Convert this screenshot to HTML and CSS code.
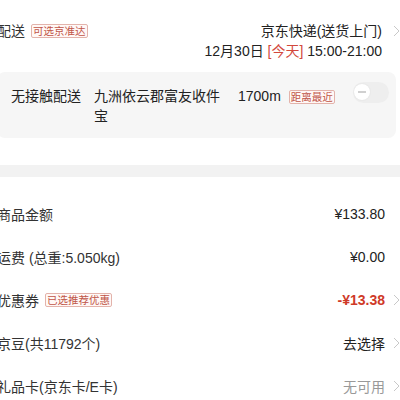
FILE: index.html
```html
<!DOCTYPE html>
<html lang="zh-CN">
<head>
  <meta charset="UTF-8">
  <meta name="viewport" content="width=device-width, initial-scale=1.0">
  <title>确认订单</title>
  <link rel="stylesheet" href="styles.css">
</head>
<body>
  <div class="page">
    <!-- 配送方式 -->
    <div class="delivery">
      <div class="delivery-title">
        <span>配送</span>
        <span class="tag">可选京准达</span>
      </div>
      <div class="delivery-info">
        <div class="delivery-lines">
          <div>京东快递(送货上门)</div>
          <div>12月30日 <span class="today">[今天]</span> 15:00-21:00</div>
        </div>
        <svg class="arrow" viewBox="0 0 7 12"><polyline points="1,1 6,6 1,11"/></svg>
      </div>
    </div>

    <!-- 无接触配送 -->
    <div class="contactless">
      <div class="cl-label">无接触配送</div>
      <div class="cl-addr">九洲依云郡富友收件宝</div>
      <div class="cl-dist">1700m</div>
      <span class="tag">距离最近</span>
      <div class="switch"><span class="knob"></span></div>
    </div>

    <div class="band"></div>

    <!-- 金额明细 -->
    <div class="rows">
      <div class="row">
        <span class="label">商品金额</span>
        <span class="value">¥133.80</span>
        <span class="arrow-space"></span>
      </div>
      <div class="row">
        <span class="label">运费 (总重:5.050kg)</span>
        <span class="value">¥0.00</span>
        <span class="arrow-space"></span>
      </div>
      <div class="row">
        <span class="label">优惠券 <span class="tag">已选推荐优惠</span></span>
        <span class="value discount">-¥13.38</span>
        <svg class="arrow" viewBox="0 0 7 12"><polyline points="1,1 6,6 1,11"/></svg>
      </div>
      <div class="row">
        <span class="label">京豆(共11792个)</span>
        <span class="value">去选择</span>
        <svg class="arrow" viewBox="0 0 7 12"><polyline points="1,1 6,6 1,11"/></svg>
      </div>
      <div class="row">
        <span class="label">礼品卡(京东卡/E卡)</span>
        <span class="value muted">无可用</span>
        <svg class="arrow" viewBox="0 0 7 12"><polyline points="1,1 6,6 1,11"/></svg>
      </div>
    </div>
  </div>
</body>
</html>
```

FILE: styles.css
```css
body {
  margin: 0;
  background: #fff;
  font-family: "Liberation Sans", "Noto Sans CJK SC", sans-serif;
  font-size: 14px;
  color: #333;
  overflow: hidden;
}

.page {
  width: 403px;
  margin-left: -3px;
}

.tag {
  display: inline-block;
  font-size: 10.5px;
  line-height: 12px;
  padding: 0 1px;
  color: #bf5548;
  background: #fff8f6;
  border: 1px solid #e3b3ab;
  border-radius: 2px;
  vertical-align: middle;
}

.arrow {
  width: 7px;
  height: 12px;
  fill: none;
  stroke: #c8c8c8;
  stroke-width: 1;
  flex: none;
}

/* 配送 */
.delivery {
  display: flex;
  justify-content: space-between;
  padding-top: 21px;
  line-height: 20px;
}

.delivery-title {
  display: flex;
  align-items: center;
  gap: 6px;
  height: 20px;
}

.delivery-info {
  display: flex;
  gap: 11px;
}

.delivery-info .arrow {
  margin-top: 4px;
}

.delivery-lines {
  text-align: right;
  color: #222;
}

.today {
  color: #d2483c;
}

/* 无接触配送 */
.contactless {
  display: flex;
  align-items: flex-start;
  margin: 11px 4px 0 0;
  padding: 14px 7px 12px 14px;
  background: #f6f6f6;
  border-radius: 8px;
  line-height: 20px;
  color: #222;
}

.cl-label {
  width: 83px;
  flex: none;
}

.cl-addr {
  width: 135px;
  flex: none;
}

.cl-dist {
  margin-left: 9px;
  margin-right: 8px;
}

.contactless .tag {
  margin-top: 4px;
}

.switch {
  width: 36px;
  height: 21px;
  margin: -4px 0 0 auto;
  border-radius: 11px;
  background: #eeeeee;
  position: relative;
}

.knob {
  position: absolute;
  left: 1px;
  top: 2px;
  width: 16px;
  height: 16px;
  border-radius: 50%;
  background: #fff;
  box-shadow: 0 0 2px rgba(0, 0, 0, 0.08);
}

.knob::after {
  content: "";
  position: absolute;
  left: 4px;
  top: 7px;
  width: 8px;
  height: 2px;
  background: #d0d0d0;
}

.band {
  height: 12px;
  margin-top: 27px;
  background: #f2f2f2;
}

/* 金额明细 */
.rows {
  padding-top: 15px;
}

.row {
  display: flex;
  align-items: center;
  height: 43px;
}

.label {
  flex: 1;
  display: flex;
  align-items: center;
  gap: 6px;
}

.value {
  color: #222;
  margin-right: 8px;
}

.discount {
  color: #cf3a28;
  font-weight: bold;
}

.muted {
  color: #999;
}

.arrow-space {
  width: 7px;
}
```
